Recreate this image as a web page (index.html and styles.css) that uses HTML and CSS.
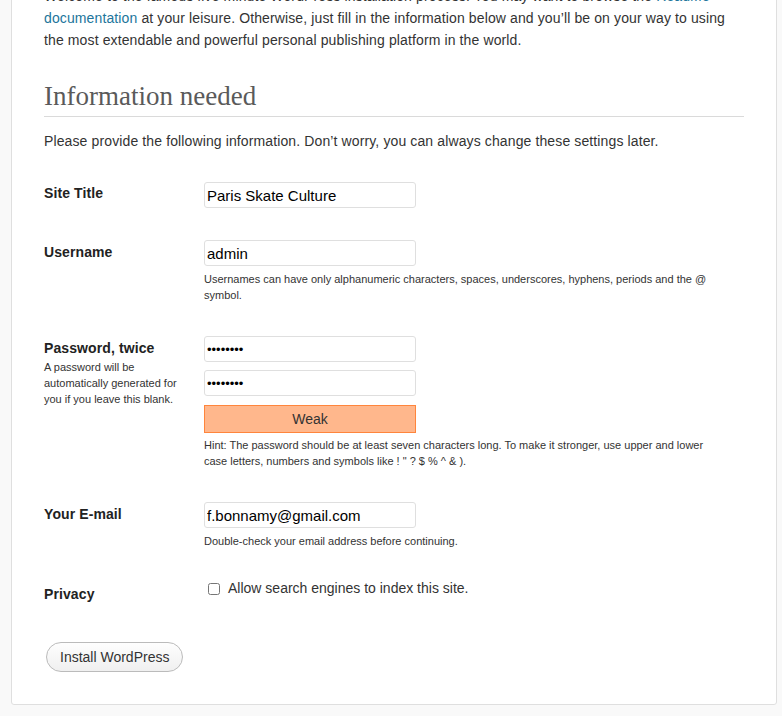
FILE: index.html
```html
<!DOCTYPE html>
<html lang="en">
<head>
<meta charset="utf-8">
<title>WordPress › Installation</title>
<link rel="stylesheet" href="styles.css">
</head>
<body>
<div class="page">
  <main class="card">
    <p class="intro">Welcome to the famous five minute WordPress installation process! You may want to browse the <a href="#">ReadMe</a><br><a href="#">documentation</a> at your leisure. Otherwise, just fill in the information below and you’ll be on your way to using<br>the most extendable and powerful personal publishing platform in the world.</p>

    <h1 class="title">Information needed</h1>
    <p class="lead">Please provide the following information. Don’t worry, you can always change these settings later.</p>

    <form class="form">
      <div class="row row-site">
        <label class="label" for="weblog_title">Site Title</label>
        <div class="field">
          <input class="input" id="weblog_title" type="text" value="Paris Skate Culture">
        </div>
      </div>

      <div class="row row-user">
        <label class="label" for="user_login">Username</label>
        <div class="field">
          <input class="input" id="user_login" type="text" value="admin">
          <p class="desc">Usernames can have only alphanumeric characters, spaces, underscores, hyphens, periods and the @<br>symbol.</p>
        </div>
      </div>

      <div class="row row-pass">
        <div class="label-wrap">
          <label class="label" for="pass1">Password, twice</label>
          <p class="label-desc">A password will be<br>automatically generated for<br>you if you leave this blank.</p>
        </div>
        <div class="field">
          <input class="input pass" id="pass1" type="password" value="skate123">
          <input class="input pass pass2" id="pass2" type="password" value="skate123">
          <div class="strength">Weak</div>
          <p class="desc hint">Hint: The password should be at least seven characters long. To make it stronger, use upper and lower<br>case letters, numbers and symbols like ! " ? $ % ^ &amp; ).</p>
        </div>
      </div>

      <div class="row row-mail">
        <label class="label" for="admin_email">Your E-mail</label>
        <div class="field">
          <input class="input" id="admin_email" type="text" value="f.bonnamy@gmail.com">
          <p class="desc">Double-check your email address before continuing.</p>
        </div>
      </div>

      <div class="row row-privacy">
        <span class="label label-privacy">Privacy</span>
        <div class="field">
          <label class="check"><input class="checkbox" type="checkbox"> Allow search engines to index this site.</label>
        </div>
      </div>

      <div class="submit">
        <button class="button" type="button">Install WordPress</button>
      </div>
    </form>
  </main>
</div>
</body>
</html>
```

FILE: styles.css
```css
html, body {
  margin: 0;
  padding: 0;
  background: #f9f9f9;
}

body {
  font-family: "Liberation Sans", Arial, sans-serif;
  font-size: 14px;
  color: #333;
  overflow: hidden;
}

.page {
  padding: 0 5px 0 11px;
}

.card {
  margin-top: -16px;
  background: #fff;
  border: 1px solid #dfdfdf;
  border-radius: 3px;
  padding: 0 32px 32px;
}

a {
  color: #21759b;
  text-decoration: none;
}

.intro {
  margin: 0;
  line-height: 22px;
  white-space: nowrap;
  letter-spacing: 0.12px;
}

.title {
  margin: 31px 0 0;
  padding-bottom: 5px;
  border-bottom: 1px solid #dadada;
  font-family: "Liberation Serif", Georgia, serif;
  font-weight: normal;
  font-size: 27px;
  line-height: 29px;
  color: #5a5a5a;
}

.lead {
  margin: 13px 0 0;
  line-height: 22px;
  letter-spacing: 0.12px;
}

.form {
  margin-top: 30px;
}

.row {
  display: grid;
  grid-template-columns: 160px 1fr;
  align-items: start;
}

.row-site { margin-bottom: 32px; }
.row-user { margin-bottom: 33px; }
.row-pass { margin-bottom: 33px; }
.row-mail { margin-bottom: 28px; }

.label {
  display: block;
  font-weight: bold;
  font-size: 14px;
  line-height: 22px;
  color: #222;
  margin-top: 1px;
  letter-spacing: 0.1px;
}

.row-site .label { margin-top: 0; }

.label-privacy {
  margin-top: 6px;
}

.label-desc {
  margin: 0;
  font-size: 11px;
  line-height: 16px;
  color: #333;
}

.field {
  display: flex;
  flex-direction: column;
  align-items: flex-start;
}

.input {
  box-sizing: border-box;
  width: 212px;
  height: 26px;
  margin: 0;
  padding: 2px 2px;
  border: 1px solid #dfdfdf;
  border-radius: 3px;
  background: #fff;
  font-family: "Liberation Sans", Arial, sans-serif;
  font-size: 15px;
  color: #000;
  outline: none;
}

.pass {
  font-size: 13px;
  letter-spacing: 0;
}

.pass2 {
  margin-top: 8px;
}

.strength {
  box-sizing: border-box;
  width: 212px;
  height: 28px;
  margin-top: 9px;
  background: #ffb78c;
  border: 1px solid #ff853c;
  text-align: center;
  line-height: 26px;
  font-size: 14px;
  color: #333;
}

.desc {
  margin: 5px 0 0;
  font-size: 11px;
  line-height: 16px;
  color: #333;
  white-space: nowrap;
}

.hint {
  margin-top: 4px;
}

.check {
  display: flex;
  align-items: center;
  gap: 8px;
  line-height: 22px;
  font-size: 14px;
  color: #333;
  padding-left: 4px;
}

.checkbox {
  width: 12px;
  height: 12px;
  margin: 1px 0 0;
}

.submit {
  margin-top: 37px;
  padding-left: 2px;
}

.button {
  box-sizing: border-box;
  height: 30px;
  padding: 0 13px;
  border: 1px solid #bbb;
  border-radius: 15px;
  background: linear-gradient(#fefefe, #f0f0f0);
  font-family: "Liberation Sans", Arial, sans-serif;
  font-size: 14px;
  color: #333;
  cursor: pointer;
}
```
